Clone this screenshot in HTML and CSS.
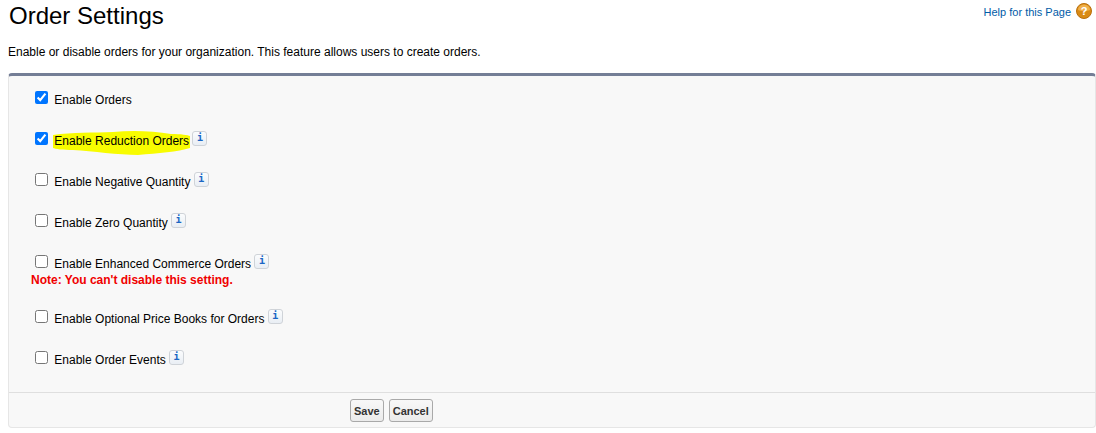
FILE: index.html
```html
<!DOCTYPE html>
<html lang="en">
<head>
    <meta charset="UTF-8">
    <title>Order Settings</title>
    <link rel="stylesheet" href="styles.css">
</head>
<body>
    <!-- Page header -->
    <header class="page-head">
        <h1>Order Settings</h1>
        <div class="help">
            <a href="#">Help for this Page</a>
            <svg class="help-icon" width="16" height="16" viewBox="0 0 16 16">
                <circle cx="8" cy="8" r="7.5" fill="#d98a14" stroke="#b96f0c"/>
                <path d="M2 7a6 5.500 0 0 1 12 0c-3 1.500-9 1.500-12 0z" fill="#f0b04a"/>
                <text x="8" y="12" text-anchor="middle" class="help-mark">?</text>
            </svg>
        </div>
    </header>
    <p class="intro">Enable or disable orders for your organization. This feature allows users to create orders.</p>

    <!-- Settings panel -->
    <form class="panel">
        <div class="options">
            <div class="row">
                <input type="checkbox" checked>
                <label>Enable Orders</label>
            </div>
            <div class="row">
                <input type="checkbox" checked>
                <label>
                    <!-- yellow marker stroke over the label -->
                    <svg class="marker" width="138" height="26" viewBox="0 0 138 26">
                        <path d="M0 5C20 2 40 3 60 2C80 0 100 1 118 4C128 4 135 5 137 6L137 18C125 22 105 23 85 25C65 25 40 21 20 20C10 20 2 19 0 18Z" fill="#f8fc00"/>
                    </svg>
                    <span class="marked-text">Enable Reduction Orders</span>
                </label>
                <span class="info">i</span>
            </div>
            <div class="row">
                <input type="checkbox">
                <label>Enable Negative Quantity</label>
                <span class="info">i</span>
            </div>
            <div class="row">
                <input type="checkbox">
                <label>Enable Zero Quantity</label>
                <span class="info">i</span>
            </div>
            <div class="row row-note">
                <input type="checkbox">
                <label>Enable Enhanced Commerce Orders</label>
                <span class="info">i</span>
                <div class="note">Note: You can't disable this setting.</div>
            </div>
            <div class="row">
                <input type="checkbox">
                <label>Enable Optional Price Books for Orders</label>
                <span class="info">i</span>
            </div>
            <div class="row">
                <input type="checkbox">
                <label>Enable Order Events</label>
                <span class="info">i</span>
            </div>
        </div>
        <div class="buttons">
            <button type="button">Save</button>
            <button type="button">Cancel</button>
        </div>
    </form>
</body>
</html>
```

FILE: styles.css
```css
body {
    margin: 0;
    font-family: "Liberation Sans", Arial, sans-serif;
    font-size: 12px;
    color: #000;
    background-color: #fff;
}
.page-head {
    display: flex;
    justify-content: space-between;
    align-items: flex-start;
    height: 45px;
    padding: 0 4px 0 9px;
}
.page-head h1 {
    margin: 0;
    padding-top: 1px;
    font-size: 24px;
    font-weight: normal;
    line-height: 30px;
}
.help {
    display: flex;
    align-items: center;
    gap: 5px;
    padding-top: 3px;
    font-size: 11px;
}
.help a {
    position: relative;
    top: 1px;
    color: #015ba7;
    text-decoration: none;
}
.help-mark {
    font-family: "Liberation Sans", Arial, sans-serif;
    font-size: 11px;
    font-weight: bold;
    fill: #fff;
}
.intro {
    margin: 0 0 0 8px;
    height: 28px;
    line-height: 15px;
}
.panel {
    margin: 0 0 5px 8px;
    border: 1px solid #e6e6e6;
    border-top: 3px solid #747e96;
    border-radius: 4px;
    background-color: #f8f8f8;
}
.options {
    height: 316px;
    padding-top: 2px;
    box-sizing: border-box;
}
.row {
    height: 41px;
    padding: 13px 0 0 26px;
    box-sizing: border-box;
}
.row-note {
    height: 55px;
}
.row input {
    width: 13px;
    height: 13px;
    margin: 0 3px 0 0;
    vertical-align: top;
}
.row label {
    position: relative;
    display: inline-block;
    margin-top: 2px;
    line-height: 15px;
    vertical-align: top;
}
.marker {
    position: absolute;
    left: -1px;
    top: -4px;
}
.marked-text {
    position: relative;
}
.info {
    display: inline-block;
    box-sizing: border-box;
    width: 15px;
    height: 15px;
    margin-top: -1px;
    border: 1px solid #cfd3d8;
    border-radius: 3px;
    background: linear-gradient(#fbfcfd, #e9eef4);
    color: #1b66c4;
    font-family: "DejaVu Sans Mono", "Liberation Mono", monospace;
    font-size: 10px;
    font-weight: bold;
    line-height: 12px;
    text-align: center;
    vertical-align: top;
}
.note {
    margin: 1px 0 0 -4px;
    color: #f00000;
    font-weight: bold;
    line-height: 14px;
}
.buttons {
    display: flex;
    gap: 5px;
    height: 35px;
    padding: 6px 0 0 341px;
    box-sizing: border-box;
    border-top: 1px solid #dfdfdf;
}
.buttons button {
    height: 23px;
    padding: 0 3px;
    border: 1px solid #a9a9a9;
    border-radius: 3px;
    background: linear-gradient(#f8f8f8, #ebebeb);
    color: #333;
    font-family: "Liberation Sans", Arial, sans-serif;
    font-size: 11px;
    font-weight: bold;
}
```
